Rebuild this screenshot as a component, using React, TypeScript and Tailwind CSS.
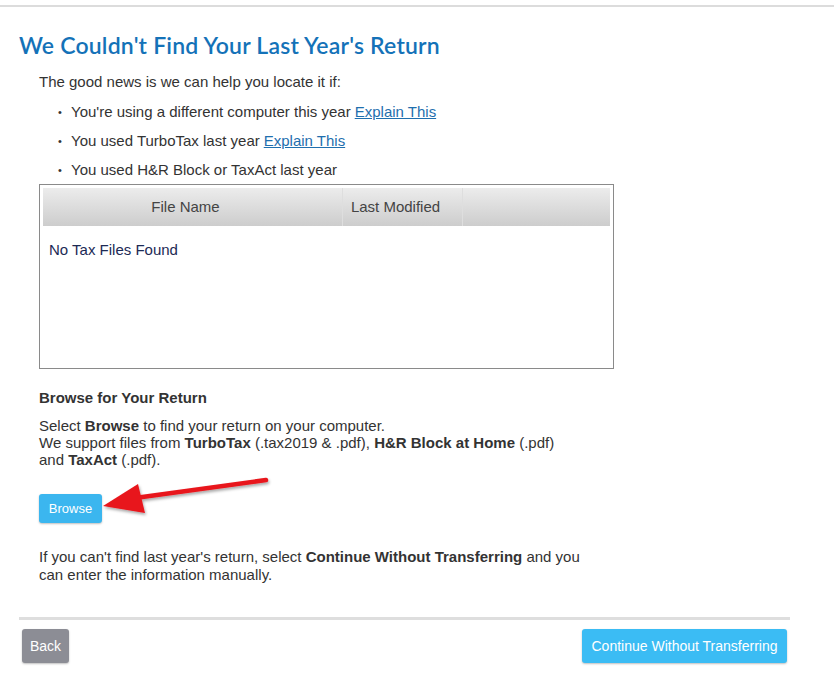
import React from "react";

const Bullet = ({ children }: { children: React.ReactNode }) => (
  <li className="flex items-center h-[29px]">
    <span className="w-[13px] text-[11px]">•</span>
    <span>{children}</span>
  </li>
);

const ExplainLink = () => (
  <a href="#" className="text-[#1f6fae] underline ml-1">
    Explain This
  </a>
);

const RedArrow = () => (
  <svg
    className="absolute left-[64px] top-[-19px]"
    width="172"
    height="46"
    viewBox="0 0 172 46"
  >
    <defs>
      <filter id="sh" x="-10%" y="-30%" width="130%" height="160%">
        <feDropShadow dx="1" dy="2" stdDeviation="1.5" floodColor="#000" floodOpacity="0.35" />
      </filter>
    </defs>
    <g filter="url(#sh)">
      <line x1="163" y1="5" x2="32" y2="23" stroke="#e8151b" strokeWidth="4.5" strokeLinecap="round" />
      <polygon points="0,31 35,9 42,38" fill="#e8151b" />
    </g>
  </svg>
);

export default function App() {
  return (
    <div className="w-[834px] h-[689px] bg-white font-['Liberation_Sans',Arial,sans-serif] text-[15px] text-[#333]">
      <div className="h-[5px]" />
      <div className="h-[2px] bg-[#dcdcdc]" />
      <div className="pl-[19px] pr-[44px]">
        <h1 className="pt-[23px] text-[23px] leading-[30px] font-semibold text-[#1472b8] font-['Lato',sans-serif] tracking-[0.2px]">
          We Couldn't Find Your Last Year's Return
        </h1>
        <div className="pl-[20px]">
          <p className="mt-[12px] leading-[20px]">The good news is we can help you locate it if:</p>
          <ul className="pl-[19px] mt-[6px]">
            <Bullet>
              You're using a different computer this year<ExplainLink />
            </Bullet>
            <Bullet>
              You used TurboTax last year<ExplainLink />
            </Bullet>
            <Bullet>You used H&amp;R Block or TaxAct last year</Bullet>
          </ul>
          <div className="w-[575px] h-[185px] border border-[#8a8a8a] p-[3px] -mt-[1px]">
            <div className="flex h-[38px] bg-gradient-to-b from-[#ececec] to-[#cdcdcd] text-[#444]">
              <div className="w-[300px] flex items-center justify-center pr-[14px] border-r border-[#dedede]">File Name</div>
              <div className="w-[120px] flex items-center justify-center pr-[14px] border-r border-[#dedede]">Last Modified</div>
              <div className="flex-1" />
            </div>
            <div className="pl-[6px] pt-[13px] text-[#1c2a55]">No Tax Files Found</div>
          </div>
          <h2 className="mt-[19px] font-bold text-[15px] leading-[20px]">Browse for Your Return</h2>
          <p className="mt-[9px] leading-[17px]">
            Select <b>Browse</b> to find your return on your computer.
            <br />
            We support files from <b>TurboTax</b> (.tax2019 &amp; .pdf), <b>H&amp;R Block at Home</b> (.pdf)
            <br />
            and <b>TaxAct</b> (.pdf).
          </p>
          <div className="relative mt-[26px]">
            <button className="w-[63px] h-[29px] rounded-[3px] bg-[#3bb6ef] text-white text-[13px] shadow-[0_1px_2px_rgba(0,0,0,0.25)]">
              Browse
            </button>
            <RedArrow />
          </div>
          <p className="mt-[25px] leading-[18px] w-[560px]">
            If you can't find last year's return, select <b>Continue Without Transferring</b> and you can enter the
            information manually.
          </p>
        </div>
        <div className="mt-[33px] h-[3px] bg-[#dedede] w-[771px]" />
        <div className="flex justify-between w-[768px] mt-[9px] pl-[3px]">
          <button className="w-[47px] h-[34px] rounded-[3px] bg-[#8c8d95] text-white text-[14px] shadow-[0_1px_2px_rgba(0,0,0,0.25)]">
            Back
          </button>
          <button className="w-[205px] h-[34px] rounded-[3px] bg-[#3bbcf4] text-white text-[14px] shadow-[0_1px_2px_rgba(0,0,0,0.25)]">
            Continue Without Transferring
          </button>
        </div>
      </div>
    </div>
  );
}
